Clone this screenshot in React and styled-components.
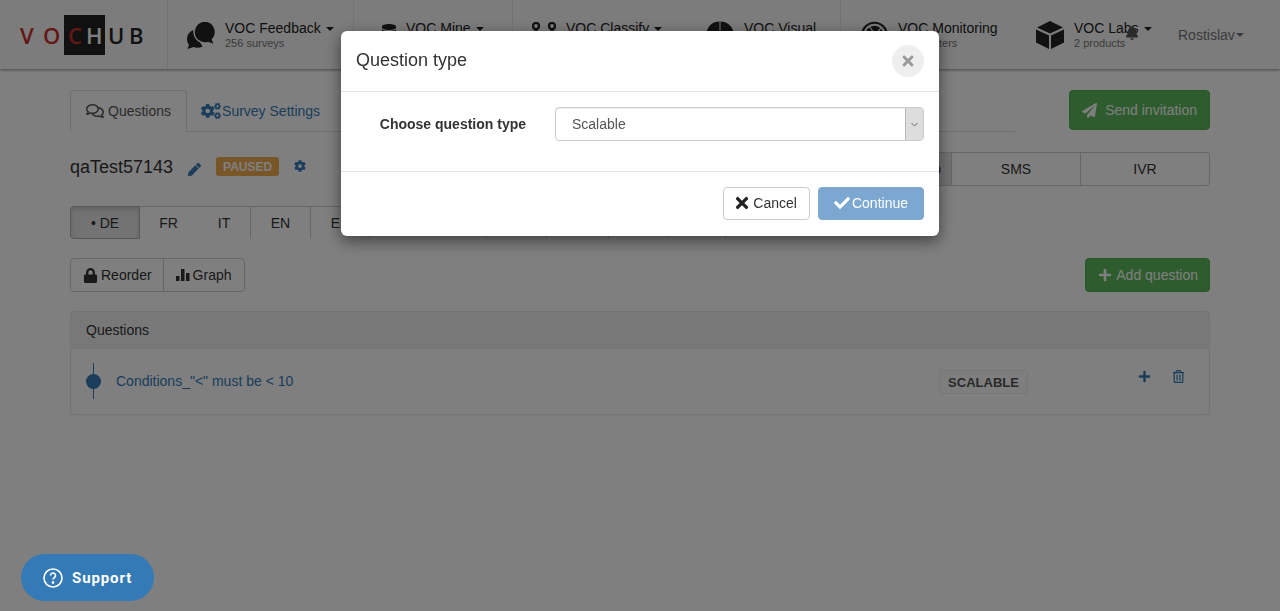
import React from "react";
import styled, { createGlobalStyle } from "styled-components";
import {
  FaBell,
  FaCheck,
  FaCog,
  FaCogs,
  FaDatabase,
  FaLock,
  FaPaperPlane,
  FaPen,
  FaPlus,
  FaRegComments,
  FaRegTrashAlt,
  FaTimes,
} from "react-icons/fa";

const GlobalStyle = createGlobalStyle`
  html, body {
    margin: 0;
    height: 100%;
    overflow: hidden;
    background: #fff;
    font-family: "Liberation Sans", Arial, sans-serif;
    font-size: 14px;
    color: #333;
  }
  * { box-sizing: border-box; }
`;

const Navbar = styled.header`
  display: flex;
  height: 69px;
  background: #f8f8f8;
  box-shadow: 0 1px 3px rgba(0, 0, 0, 0.45);
`;

const LogoCell = styled.div`
  width: 168px;
  display: flex;
  align-items: center;
  padding-left: 20px;
  border-right: 1px solid #e7e7e7;
`;

const LogoLetter = styled.span`
  display: inline-block;
  width: ${(p) => p.$width}px;
  font-family: "Open Sans", sans-serif;
  font-size: 22px;
  font-weight: 600;
  line-height: 40px;
  color: ${(p) => p.$color || "#222"};
`;

const LogoBox = styled.span`
  display: inline-flex;
  height: 40px;
  width: 41px;
  padding-left: 4px;
  margin-right: 3px;
  background: #222;
`;

const NavItem = styled.div`
  width: ${(p) => p.$width}px;
  display: flex;
  align-items: center;
  padding-left: ${(p) => p.$pad}px;
  gap: ${(p) => p.$gap || 9}px;
  border-right: ${(p) => (p.$line ? "1px solid #e7e7e7" : "none")};
  color: #222;
  flex-shrink: 0;
  position: relative;
`;

const NavIcon = styled.span`
  display: inline-flex;
  color: #222;
  margin-bottom: ${(p) => p.$lift || 0}px;
`;

const NavCopy = styled.div`
  margin-top: 2px;
`;

const NavText = styled.div`
  line-height: 15px;
  white-space: nowrap;
`;

const NavSub = styled.div`
  font-size: 11px;
  line-height: 15px;
  color: #777;
  white-space: nowrap;
`;

const Caret = styled.span`
  display: inline-block;
  margin-left: ${(p) => p.$gap ?? 5}px;
  vertical-align: 2px;
  border-top: 4px solid currentColor;
  border-left: 4px solid transparent;
  border-right: 4px solid transparent;
`;

const UserItem = styled.div`
  display: flex;
  align-items: center;
  margin-left: 17px;
  color: #777;
`;

const BellIcon = styled.span`
  position: absolute;
  left: 105px;
  top: 26px;
  display: inline-flex;
  color: #555;
`;

const Container = styled.main`
  width: 1140px;
  margin: 21px 0 0 70px;
`;

const TabsRow = styled.div`
  display: flex;
  justify-content: space-between;
  height: 42px;
`;

const Tabs = styled.div`
  width: 945px;
  height: 42px;
  display: flex;
  border-bottom: 1px solid #ddd;
`;

const Tab = styled.div`
  display: flex;
  align-items: center;
  height: 42px;
  padding: 0 ${(p) => (p.$active ? 15 : 13)}px;
  gap: ${(p) => (p.$active ? 4 : 1)}px;
  color: ${(p) => (p.$active ? "#555" : "#337ab7")};
  background: ${(p) => (p.$active ? "#fff" : "transparent")};
  border: 1px solid ${(p) => (p.$active ? "#ddd" : "transparent")};
  border-bottom-color: ${(p) => (p.$active ? "#fff" : "transparent")};
  border-radius: 4px 4px 0 0;
`;

const SolidButton = styled.div`
  display: flex;
  align-items: center;
  height: ${(p) => p.$height}px;
  padding: 0 ${(p) => p.$right}px 0 12px;
  gap: ${(p) => p.$gap}px;
  color: #fff;
  background: #5cb85c;
  border: 1px solid #4cae4c;
  border-radius: 4px;
`;

const TitleRow = styled.div`
  display: flex;
  align-items: center;
  justify-content: space-between;
  margin-top: 20px;
  height: 34px;
`;

const TitleLeft = styled.div`
  display: flex;
  align-items: center;
  padding-bottom: 6px;
`;

const Title = styled.div`
  font-size: 18px;
  margin: 2px 15px 0 0;
  color: #333;
`;

const EditIcon = styled.span`
  display: inline-flex;
  color: #337ab7;
  margin-right: 15px;
  margin-top: ${(p) => p.$drop || 0}px;
`;

const PausedBadge = styled.span`
  display: inline-block;
  padding: 3px 7px 2px;
  font-size: 12px;
  line-height: 14px;
  font-weight: 700;
  color: #fff;
  background: #f0ad4e;
  border-radius: 3px;
  margin-right: 15px;
`;

const ChannelGroup = styled.div`
  display: flex;
`;

const ChannelButton = styled.div`
  width: 130px;
  height: 34px;
  display: flex;
  align-items: center;
  justify-content: ${(p) => (p.$active ? "flex-end" : "center")};
  padding-right: ${(p) => (p.$active ? 10 : 0)}px;
  white-space: nowrap;
  background: ${(p) => (p.$active ? "#e6e6e6" : "#fff")};
  border: 1px solid #ccc;
  margin-left: -1px;
  &:last-child {
    border-radius: 0 4px 4px 0;
  }
`;

const LanguageRow = styled.div`
  display: flex;
  margin-top: 20px;
`;

const LanguageTab = styled.div`
  width: ${(p) => p.$width}px;
  height: 33px;
  display: flex;
  align-items: center;
  justify-content: center;
  background: ${(p) => (p.$active ? "#e6e6e6" : "#fff")};
  border: 1px solid ${(p) => (p.$active ? "#adadad" : "#ccc")};
  border-left-width: ${(p) => (p.$active ? 1 : 0)}px;
  border-bottom-color: ${(p) => (p.$active ? "#adadad" : "#fff")};
  border-right-color: ${(p) => (p.$noLine ? "#fff" : p.$active ? "#adadad" : "#ccc")};
  border-radius: ${(p) => (p.$active ? "4px 0 0 4px" : "0")};
  box-shadow: ${(p) => (p.$active ? "inset 0 3px 5px rgba(0,0,0,.125)" : "none")};
`;

const ActionsRow = styled.div`
  display: flex;
  justify-content: space-between;
  margin-top: 19px;
`;

const ButtonGroup = styled.div`
  display: flex;
`;

const GroupButton = styled.div`
  height: 34px;
  display: flex;
  align-items: center;
  gap: 3px;
  padding: 0 ${(p) => (p.$first ? 11 : 12)}px 0 12px;
  background: #fff;
  border: 1px solid #ccc;
  margin-left: ${(p) => (p.$first ? 0 : -1)}px;
  border-radius: ${(p) => (p.$first ? "4px 0 0 4px" : "0 4px 4px 0")};
`;

const Panel = styled.section`
  margin-top: 19px;
  border: 1px solid #e8e8e8;
  border-radius: 4px;
  background: #fff;
  box-shadow: 0 1px 1px rgba(0, 0, 0, 0.05);
`;

const PanelHeading = styled.div`
  height: 37px;
  display: flex;
  align-items: center;
  padding: 0 0 2px 15px;
  background: #f0f0f0;
  border-radius: 3px 3px 0 0;
`;

const QuestionRow = styled.div`
  height: 65px;
  display: flex;
  align-items: center;
  padding: 0 0 2px 14px;
`;

const Timeline = styled.div`
  width: 16px;
  height: 36px;
  display: flex;
  align-items: center;
  justify-content: center;
  margin-right: 15px;
  margin-top: 1px;
  background: linear-gradient(#337ab7, #337ab7) center / 1px 100% no-repeat;
`;

const Dot = styled.span`
  width: 15px;
  height: 15px;
  border-radius: 50%;
  background: #337ab7;
`;

const QuestionLink = styled.span`
  color: #337ab7;
  width: 823px;
  white-space: nowrap;
`;

const TypeLabel = styled.span`
  display: inline-block;
  width: 89px;
  height: 24px;
  line-height: 23px;
  text-align: center;
  font-size: 13px;
  font-weight: 700;
  color: #555;
  background: #fcfcfc;
  border: 1px solid #eee;
  border-radius: 3px;
  margin-top: 3px;
`;

const RowActions = styled.div`
  display: flex;
  align-items: center;
  gap: 21px;
  margin-left: 110px;
  margin-top: -8px;
  color: #337ab7;
`;

const SupportButton = styled.div`
  position: fixed;
  left: 21px;
  bottom: 10px;
  z-index: 20;
  height: 47px;
  width: 133px;
  display: flex;
  align-items: center;
  gap: 9px;
  padding-left: 22px;
  border-radius: 24px;
  background: #337ab7;
  color: #fff;
  font-family: Roboto, sans-serif;
  font-weight: 700;
  font-size: 15px;
  letter-spacing: 0.9px;
`;

const Overlay = styled.div`
  position: fixed;
  inset: 0;
  z-index: 10;
  display: flex;
  justify-content: center;
  align-items: flex-start;
  padding-top: 31px;
  background: rgba(0, 0, 0, 0.5);
`;

const Modal = styled.div`
  width: 598px;
  height: 205px;
  background: #fff;
  border-radius: 6px;
  box-shadow: 0 5px 15px rgba(0, 0, 0, 0.5);
  display: flex;
  flex-direction: column;
`;

const ModalHeader = styled.div`
  height: 61px;
  display: flex;
  align-items: center;
  justify-content: space-between;
  padding: 0 15px;
  border-bottom: 1px solid #e5e5e5;
`;

const ModalTitle = styled.div`
  font-size: 18px;
  color: #333;
  margin-top: -2px;
`;

const CloseButton = styled.div`
  width: 32px;
  height: 32px;
  border-radius: 50%;
  background: #eee;
  display: flex;
  align-items: center;
  justify-content: center;
  color: #999;
  margin-top: -1px;
`;

const ModalBody = styled.div`
  height: 79px;
  display: flex;
  align-items: flex-start;
  padding: 15px 15px 0 0;
`;

const FieldLabel = styled.label`
  width: 185px;
  height: 34px;
  line-height: 34px;
  text-align: right;
  font-weight: 700;
  color: #333;
  margin-right: 29px;
`;

const SelectBox = styled.div`
  width: 369px;
  height: 34px;
  display: flex;
  justify-content: space-between;
  align-items: center;
  padding-left: 16px;
  border: 1px solid #ccc;
  border-radius: 4px;
  color: #555;
  box-shadow: inset 0 1px 1px rgba(0, 0, 0, 0.075);
  overflow: hidden;
`;

const SelectArrow = styled.span`
  width: 18px;
  height: 100%;
  display: flex;
  align-items: center;
  justify-content: center;
  background: #ddd;
  border-left: 1px solid #bbb;
  color: #666;
`;

const ModalFooter = styled.div`
  flex: 1;
  display: flex;
  justify-content: flex-end;
  align-items: flex-start;
  gap: 8px;
  padding: 15px 15px 0;
  border-top: 1px solid #e5e5e5;
`;

const CancelButton = styled.div`
  height: 33px;
  display: flex;
  align-items: center;
  gap: 2px;
  padding: 0 12px 2px 9px;
  border: 1px solid #ccc;
  border-radius: 4px;
  background: #fff;
  color: #333;
`;

const ContinueButton = styled(CancelButton)`
  padding: 0 15px 2px;
  color: #fff;
  background: #7ba7d1;
  border-color: #7ba7d1;
`;

const FeedbackIcon = () => (
  <svg width="29" height="28" viewBox="0 0 29 28" fill="#222">
    <path d="M6 9C2 11 0 14 0 18c0 2.500 1 4.500 2 6l-1.500 4 6-2c3 1.300 6 1 9-.5z" />
    <path
      d="M18 0a11 11 0 1 0 3 21.600l6.500 2.400-2-5.500A11 11 0 0 0 18 0z"
      stroke="#f8f8f8"
      strokeWidth="1.500"
    />
  </svg>
);

const ClassifyIcon = () => (
  <svg width="24" height="26" viewBox="0 0 24 26" fill="none" stroke="#222" strokeWidth="2.200">
    <circle cx="4" cy="4" r="3" />
    <circle cx="20" cy="4" r="3" />
    <path d="M4 7v16M20 7v16" strokeWidth="3" />
  </svg>
);

const PieIcon = () => (
  <svg width="28" height="28" viewBox="0 0 28 28" fill="#222">
    <path d="M13.500.5V14l-9 10A13.500 13.500 0 0 1 13.500.5z" />
    <path d="M14.500.5A13.500 13.500 0 0 1 23 24.500L14.500 14z" />
    <path d="M5.300 24.800L14 15l8 10.300a13.500 13.500 0 0 1-16.700-.5z" />
  </svg>
);

const ApertureIcon = () => (
  <svg width="27" height="28" viewBox="0 0 28 28" fill="none">
    <circle cx="14" cy="14" r="12.700" stroke="#222" strokeWidth="2.300" />
    <circle cx="14" cy="14" r="9.500" fill="#222" />
    <path
      d="M9 5.500L15 14M20.500 7L14 14M23 16L14 14M17 23L14 14M7 21.500L14 14M5 12L14 14"
      stroke="#f8f8f8"
      strokeWidth="1.300"
    />
    <path d="M14 9.500l4.500 7.500h-9z" fill="#f8f8f8" />
    <path d="M14 12l2.300 4h-4.600z" fill="#222" />
  </svg>
);

const CubeIcon = () => (
  <svg width="30" height="28" viewBox="0 0 30 28" fill="#222">
    <path d="M15 0l13 6.500-13 6-13-6z" />
    <path d="M1 8.500l13 6V28L1 21.500z" />
    <path d="M29 8.500l-13 6V28l13-6.500z" />
  </svg>
);

const BarsIcon = () => (
  <svg width="14" height="14" viewBox="0 0 14 14" fill="#333">
    <rect x="0" y="8" width="3.500" height="5" />
    <rect x="5" y="1" width="3.500" height="12" />
    <rect x="10" y="5" width="3.500" height="8" />
  </svg>
);

const HelpIcon = () => (
  <svg width="20" height="20" viewBox="0 0 20 20" fill="none" stroke="#fff" strokeWidth="1.600">
    <circle cx="10" cy="10" r="9" />
    <path d="M7.500 7.500a2.500 2.500 0 1 1 3.800 2.100c-.9.600-1.300 1-1.300 2" />
    <circle cx="10" cy="14.500" r="0.600" fill="#fff" />
  </svg>
);

const Chevron = () => (
  <svg width="7" height="5" viewBox="0 0 7 5" fill="none" stroke="currentColor">
    <path d="M0.500 1l3 3 3-3" />
  </svg>
);

const App = () => {
  return (
    <>
      <GlobalStyle />
      <Navbar>
        <LogoCell>
          <LogoLetter $width={23} $color="#c7302b">V</LogoLetter>
          <LogoLetter $width={21} $color="#c7302b">O</LogoLetter>
          <LogoBox>
            <LogoLetter $width={18} $color="#c7302b">C</LogoLetter>
            <LogoLetter $width={19} $color="#fff">H</LogoLetter>
          </LogoBox>
          <LogoLetter $width={21}>U</LogoLetter>
          <LogoLetter $width={17}>B</LogoLetter>
        </LogoCell>
        <NavItem $width={186} $pad={19} $line>
          <FeedbackIcon />
          <NavCopy>
            <NavText>VOC Feedback<Caret /></NavText>
            <NavSub>256 surveys</NavSub>
          </NavCopy>
        </NavItem>
        <NavItem $width={159} $pad={27} $line>
          <NavIcon $lift={6}><FaDatabase size={16} /></NavIcon>
          <NavCopy>
            <NavText>VOC Mine<Caret /></NavText>
            <NavSub>&nbsp;</NavSub>
          </NavCopy>
        </NavItem>
        <NavItem $width={177} $pad={19} $gap={10}>
          <ClassifyIcon />
          <NavCopy>
            <NavText>VOC Classify<Caret /></NavText>
            <NavSub>&nbsp;</NavSub>
          </NavCopy>
        </NavItem>
        <NavItem $width={151} $pad={16} $gap={10} $line>
          <PieIcon />
          <NavCopy>
            <NavText>VOC Visual</NavText>
            <NavSub>&nbsp;</NavSub>
          </NavCopy>
        </NavItem>
        <NavItem $width={179} $pad={20} $gap={10}>
          <ApertureIcon />
          <NavCopy>
            <NavText>VOC Monitoring</NavText>
            <NavSub>Active filters</NavSub>
          </NavCopy>
        </NavItem>
        <NavItem $width={141} $pad={15}>
          <CubeIcon />
          <NavCopy>
            <NavText>VOC Labs<Caret /></NavText>
            <NavSub>2 products</NavSub>
          </NavCopy>
          <BellIcon><FaBell size={14} /></BellIcon>
        </NavItem>
        <UserItem>Rostislav<Caret $gap={1} /></UserItem>
      </Navbar>

      <Container>
        <TabsRow>
          <Tabs>
            <Tab $active><FaRegComments size={18} />Questions</Tab>
            <Tab><FaCogs size={20} />Survey Settings</Tab>
          </Tabs>
          <SolidButton $height={40} $gap={8} $right={12}>
            <FaPaperPlane size={15} />Send invitation
          </SolidButton>
        </TabsRow>

        <TitleRow>
          <TitleLeft>
            <Title>qaTest57143</Title>
            <EditIcon $drop={6}><FaPen size={13} /></EditIcon>
            <PausedBadge>PAUSED</PausedBadge>
            <EditIcon><FaCog size={12} /></EditIcon>
          </TitleLeft>
          <ChannelGroup>
            <ChannelButton $active>Web and Video</ChannelButton>
            <ChannelButton>SMS</ChannelButton>
            <ChannelButton>IVR</ChannelButton>
          </ChannelGroup>
        </TitleRow>

        <LanguageRow>
          <LanguageTab $width={70} $active>• DE</LanguageTab>
          <LanguageTab $width={58} $noLine>FR</LanguageTab>
          <LanguageTab $width={53}>IT</LanguageTab>
          <LanguageTab $width={60}>EN</LanguageTab>
          <LanguageTab $width={59}>ES</LanguageTab>
          <LanguageTab $width={117}>PT</LanguageTab>
          <LanguageTab $width={60}>NL</LanguageTab>
          <LanguageTab $width={62}>PL</LanguageTab>
          <LanguageTab $width={59}>RU</LanguageTab>
          <LanguageTab $width={58}>TR</LanguageTab>
        </LanguageRow>

        <ActionsRow>
          <ButtonGroup>
            <GroupButton $first><FaLock size={15} />Reorder</GroupButton>
            <GroupButton><BarsIcon />Graph</GroupButton>
          </ButtonGroup>
          <SolidButton $height={34} $gap={4} $right={11}>
            <FaPlus size={14} />Add question
          </SolidButton>
        </ActionsRow>

        <Panel>
          <PanelHeading>Questions</PanelHeading>
          <QuestionRow>
            <Timeline><Dot /></Timeline>
            <QuestionLink>Conditions_"&lt;" must be &lt; 10</QuestionLink>
            <TypeLabel>SCALABLE</TypeLabel>
            <RowActions>
              <FaPlus size={13} />
              <FaRegTrashAlt size={13} />
            </RowActions>
          </QuestionRow>
        </Panel>
      </Container>

      <Overlay>
        <Modal>
          <ModalHeader>
            <ModalTitle>Question type</ModalTitle>
            <CloseButton><FaTimes size={16} /></CloseButton>
          </ModalHeader>
          <ModalBody>
            <FieldLabel>Choose question type</FieldLabel>
            <SelectBox>
              Scalable
              <SelectArrow><Chevron /></SelectArrow>
            </SelectBox>
          </ModalBody>
          <ModalFooter>
            <CancelButton><FaTimes size={18} color="#222" />Cancel</CancelButton>
            <ContinueButton><FaCheck size={16} />Continue</ContinueButton>
          </ModalFooter>
        </Modal>
      </Overlay>

      <SupportButton><HelpIcon />Support</SupportButton>
    </>
  );
};

export default App;
